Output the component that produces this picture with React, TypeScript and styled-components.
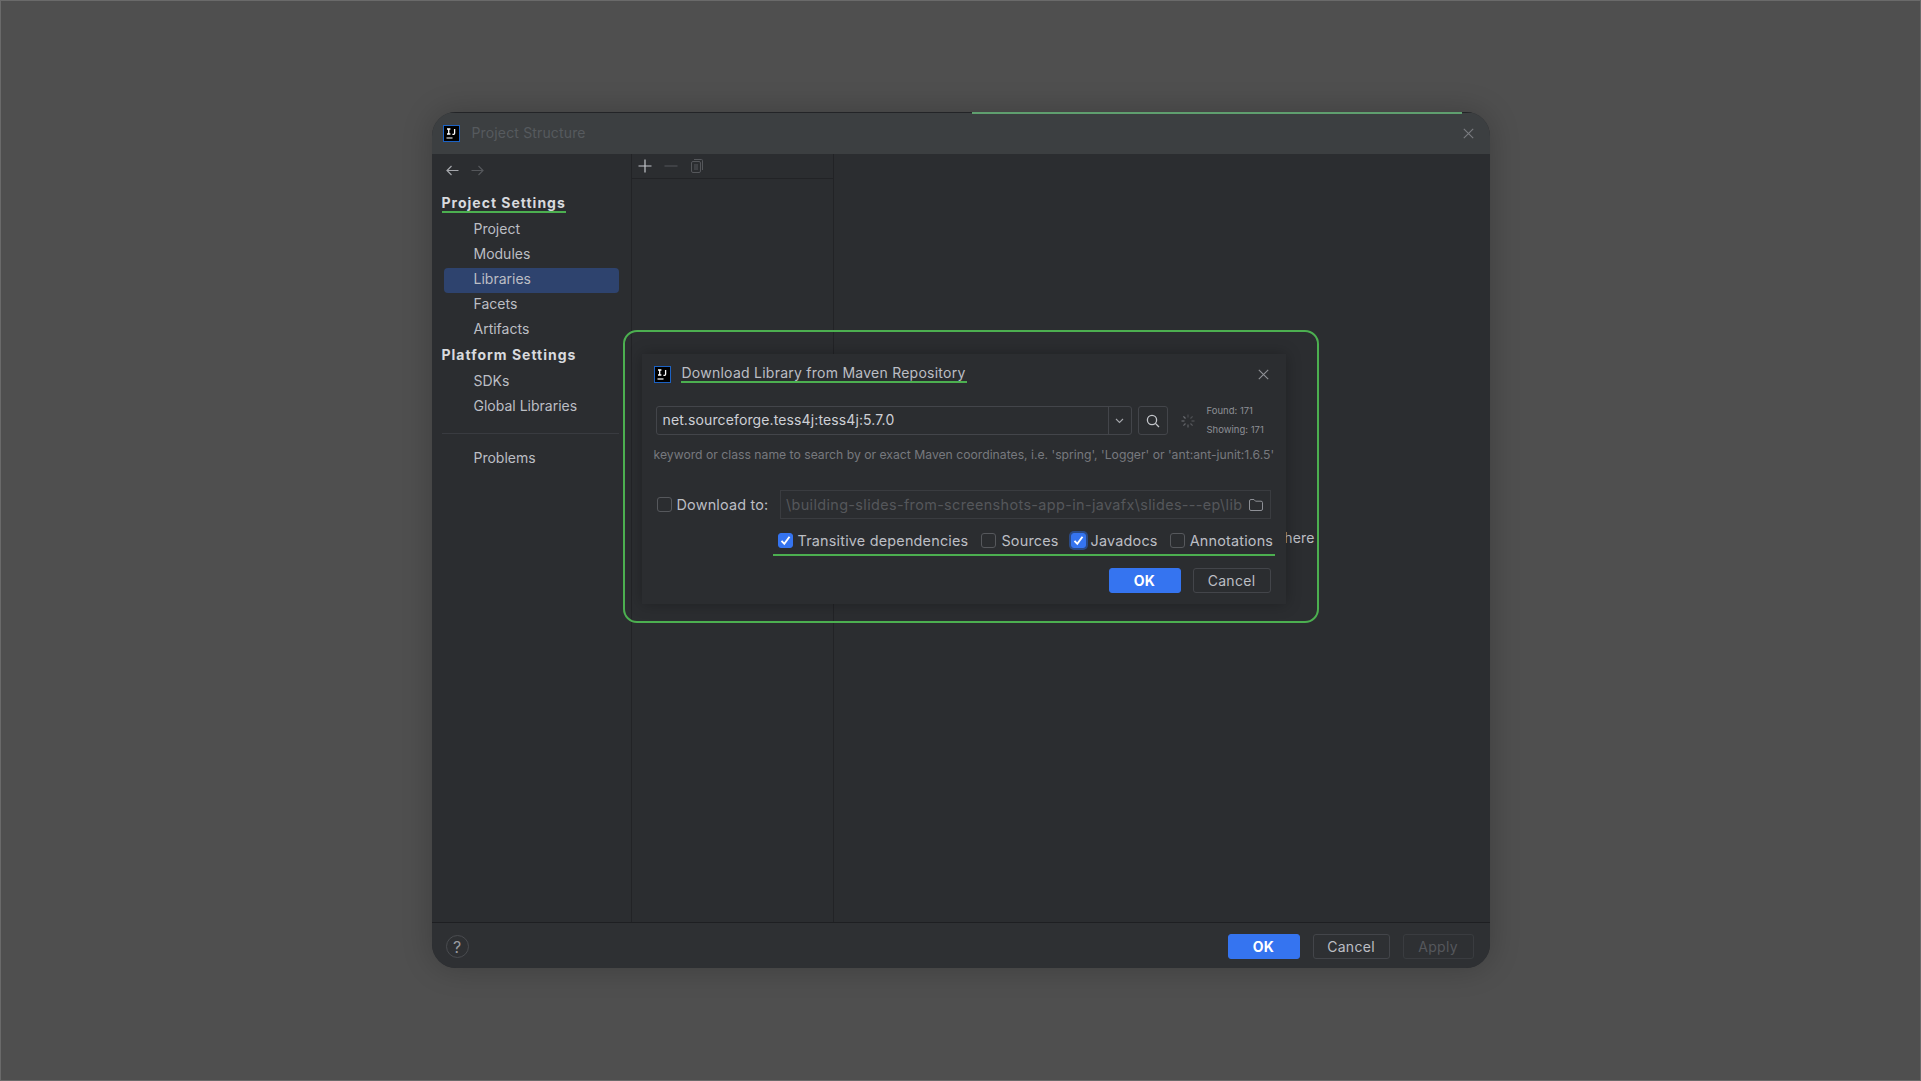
import React from "react";
import styled, { createGlobalStyle } from "styled-components";

const Global = createGlobalStyle`
  html, body { margin: 0; padding: 0; width: 100%; height: 100%; background: #4f4f4f; }
  #root { width: 100%; height: 100%; }
  * { box-sizing: border-box; }
`;

const Page = styled.div`
  width: 1921px; height: 1081px; display: flex; align-items: center; justify-content: center;
  background: #4f4f4f; border: 1px solid #6a6a6a; padding-bottom: 1px;
  font-family: Inter, "Liberation Sans", sans-serif; overflow: hidden;
`;
const Win = styled.div`
  position: relative; width: 1058px; height: 856px; display: flex; flex-direction: column;
  background: #2b2d30; border-radius: 24px; overflow: hidden; box-shadow: 0 0 30px rgba(0,0,0,.22);
`;
const ProgressLine = styled.div`
  position: absolute; top: 0; left: 540px; width: 490px; height: 2px; background: #5f9f6f;
`;
const TitleBar = styled.div`
  height: 42px; flex: none; display: flex; align-items: center; padding: 0 16px 1px 11px; background: #3c3f41; gap: 12px;
  border-top: 1px solid #232427;
`;
const TitleText = styled.div`flex: 1; padding-bottom: 2px; font-size: 14px; letter-spacing: .15px; color: #565a5e;`;
const Body = styled.div`flex: 1; display: flex; min-height: 0;`;
const Side = styled.div`width: 200px; flex: none; border-right: 1px solid #222326; padding: 6px 12px 0 10px; display: flex; flex-direction: column;`;
const NavIcons = styled.div`height: 20px; display: flex; gap: 12px; align-items: center; padding-left: 4px; margin-bottom: 12px;`;
const Heading = styled.div<{ $marked?: boolean }>`
  align-self: flex-start; height: 20px; line-height: 19px; font-size: 14px; font-weight: 700; color: #d8dade;
  letter-spacing: 1px; margin-top: 1px; border-bottom: 2px solid ${p => p.$marked ? "#4caf50" : "transparent"};
`;
const Item = styled.div<{ $active?: boolean }>`
  height: 25px; line-height: 22px; margin-left: 2px; padding-left: 30px; border-radius: 4px; font-size: 14px; color: #bcbec4;
  background: ${p => p.$active ? "#2e436e" : "transparent"};
`;
const ItemGroup = styled.div`display: flex; flex-direction: column; margin-top: 5px; margin-bottom: 1px;`;
const SideRule = styled.div`height: 1px; background: #393b40; margin: 12px 0 13px;`;
const ListPane = styled.div`width: 202px; flex: none; border-right: 1px solid #222326; display: flex; flex-direction: column;`;
const ListBar = styled.div`height: 25px; display: flex; align-items: center; gap: 10px; padding: 0 6px 1px; border-bottom: 1px solid #222326;`;
const Details = styled.div`flex: 1; display: flex; align-items: center; justify-content: center; padding-bottom: 2px; font-size: 14px; letter-spacing: .2px; color: #bcbec4;`;
const Footer = styled.div`
  height: 46px; flex: none; border-top: 1px solid #1e1f22; background: #2e3033; display: flex; align-items: center; justify-content: flex-end; padding: 2px 16px 0 14px; gap: 13px;
`;
const Help = styled.div`
  margin-right: auto; width: 23px; height: 23px; border-radius: 50%; border: 1px solid #4a4c50; color: #9a9ca1;
  display: flex; align-items: center; justify-content: center; font-size: 16px;
`;
const Btn = styled.div<{ $primary?: boolean; $off?: boolean; $w: number }>`
  width: ${p => p.$w}px; height: 25px; border-radius: 3px; display: flex; align-items: center; justify-content: center; font-size: 14px; letter-spacing: .3px;
  font-weight: ${p => p.$primary ? 700 : 400};
  background: ${p => p.$primary ? "#3574f0" : "transparent"};
  border: 1px solid ${p => p.$primary ? "#3574f0" : p.$off ? "#3a3c40" : "#43454a"};
  color: ${p => p.$primary ? "#fff" : p.$off ? "#55575c" : "#bcbec4"};
`;

const Overlay = styled.div`
  position: absolute; left: 191px; top: 218px; width: 696px; height: 293px; border: 2px solid #4caf50; border-radius: 14px;
`;
const Dialog = styled.div`
  position: absolute; left: 210px; top: 242px; width: 644px; height: 250px; background: #2b2d30;
  box-shadow: 0 0 14px rgba(0,0,0,.28); display: flex; flex-direction: column; padding: 12px 14px 10px;
`;
const DlgTitle = styled.div`height: 17px; display: flex; align-items: center; gap: 10px; margin-left: -2px; padding-right: 3px; margin-bottom: 23px;`;
const DlgTitleText = styled.div`
  font-size: 14px; line-height: 17px; height: 19px; color: #bcbec4; letter-spacing: .25px; border-bottom: 2px solid #4caf50;
  margin-right: auto; padding: 0 1px; margin-bottom: 2px;
`;
const SearchRow = styled.div`display: flex; align-items: center; height: 29px;`;
const Combo = styled.div`width: 476px; height: 29px; border: 1px solid #43454a; border-radius: 3px; display: flex; align-items: center;`;
const ComboText = styled.div`flex: 1; padding: 0 0 2px 6px; font-size: 14px; letter-spacing: .12px; color: #ced0d6;`;
const ComboArrow = styled.div`width: 23px; height: 100%; border-left: 1px solid #43454a; display: flex; align-items: center; justify-content: center;`;
const SearchBtn = styled.div`width: 30px; height: 29px; margin-left: 6px; border: 1px solid #43454a; border-radius: 3px; display: flex; align-items: center; justify-content: center;`;
const Spin = styled.div`width: 14px; height: 14px; margin: 0 12px 0 13px; display: flex;`;
const Counts = styled.div`display: flex; flex-direction: column; gap: 7px; font-size: 9.5px; line-height: 12px; color: #8e9096;`;
const Hint = styled.div`height: 40px; padding-top: 13px; font-size: 12.2px; line-height: 14px; white-space: nowrap; color: #77797e; margin-left: -2px;`;
const PathRow = styled.div`display: flex; align-items: center; height: 29px; padding-left: 1px; margin-top: 15px;`;
const Box = styled.div<{ $on?: boolean; $focus?: boolean }>`
  width: 15px; height: 15px; flex: none; border-radius: 3px; display: flex; align-items: center; justify-content: center;
  background: ${p => p.$on ? "#3574f0" : "transparent"}; border: 1px solid ${p => p.$on ? "#3574f0" : "#56585c"};
  box-shadow: ${p => p.$focus ? "0 0 0 2px #2a4a86" : "none"};
`;
const Lbl = styled.div`margin-left: 5px; font-size: 14.4px; letter-spacing: .2px; white-space: nowrap; color: #bcbec4;`;
const PathField = styled.div`
  width: 491px; height: 29px; margin-left: auto; margin-right: 1px; border: 1px solid #3a3c40; display: flex; align-items: center; padding: 0 7px 0 5px; gap: 6px;
`;
const PathText = styled.div`flex: 1; white-space: nowrap; font-size: 14.4px; letter-spacing: .37px; color: #55575b; text-align: right;`;
const Options = styled.div`align-self: flex-end; width: 502px; height: 29px; margin: 8px -3px 0 0; display: flex; align-items: center; padding: 0 0 0 5px; border-bottom: 2px solid #4caf50;`;
const Opt = styled.div<{ $gap: number }>`display: flex; align-items: center; margin-right: ${p => p.$gap}px;`;
const DlgBtns = styled.div`display: flex; justify-content: flex-end; gap: 12px; margin-top: 12px; padding-right: 1px;`;

const IJ = () => (
  <svg width="17" height="17" viewBox="0 0 17 17" style={{ flex: "none" }}>
    <rect x=".5" y=".5" width="16" height="16" fill="#000" stroke="#1c62c4" />
    <path d="M4 4h3.400M5.700 4v5M4 9h3.400M11.600 4v4.300q0 1-1 1H9.400" stroke="#fff" strokeWidth="1.300" fill="none" />
    <path d="M3.500 13h6" stroke="#fff" strokeWidth="1.200" />
  </svg>
);
const X = ({ c = "#8f9196", s = 11 }: { c?: string; s?: number }) => (
  <svg width={s} height={s} viewBox="0 0 11 11"><path d="M.8.8l9.400 9.400M10.200.8L.8 10.200" stroke={c} strokeWidth="1.100" fill="none" /></svg>
);
const Check = () => (
  <svg width="11" height="11" viewBox="0 0 11 11"><path d="M1.500 5.800l2.800 3L9.500 1.800" stroke="#fff" strokeWidth="1.900" fill="none" /></svg>
);
const Arrow = ({ dir, c }: { dir: "l" | "r"; c: string }) => (
  <svg width="13" height="11" viewBox="0 0 13 11" style={{ transform: dir === "r" ? "scaleX(-1)" : undefined }}>
    <path d="M12.500 5.500H1M5.500 1L1 5.500 5.500 10" stroke={c} strokeWidth="1.200" fill="none" />
  </svg>
);

const spokes = Array.from({ length: 8 }, (_, i) => i * 45);

export default function App() {
  return (
    <Page>
      <Global />
      <Win>
        <ProgressLine />
        <TitleBar>
          <IJ />
          <TitleText>Project Structure</TitleText>
          <X c="#7a7c80" />
        </TitleBar>
        <Body>
          <Side>
            <NavIcons>
              <Arrow dir="l" c="#a4a6ab" />
              <Arrow dir="r" c="#55575b" />
            </NavIcons>
            <Heading $marked>Project Settings</Heading>
            <ItemGroup>
              <Item>Project</Item>
              <Item>Modules</Item>
              <Item $active>Libraries</Item>
              <Item>Facets</Item>
              <Item>Artifacts</Item>
            </ItemGroup>
            <Heading>Platform Settings</Heading>
            <ItemGroup>
              <Item>SDKs</Item>
              <Item>Global Libraries</Item>
            </ItemGroup>
            <SideRule />
            <Item>Problems</Item>
          </Side>
          <ListPane>
            <ListBar>
              <svg width="14" height="14" viewBox="0 0 14 14"><path d="M7 .5v13M.5 7h13" stroke="#c4c6cb" strokeWidth="1.200" /></svg>
              <svg width="14" height="14" viewBox="0 0 14 14" style={{ marginLeft: 2 }}><path d="M.5 7h13" stroke="#55575b" strokeWidth="1.200" /></svg>
              <svg width="14" height="14" viewBox="0 0 14 14" style={{ marginLeft: 2 }} fill="none" stroke="#55575b">
                <rect x="1.500" y="2.500" width="9" height="11" rx="1.500" />
                <path d="M4 .5h7.500a1 1 0 0 1 1 1V11M4 6h4M4 8h4M4 10h4" />
              </svg>
            </ListBar>
          </ListPane>
          <Details>Select a library to view or edit its details here</Details>
        </Body>
        <Footer>
          <Help>?</Help>
          <Btn $primary $w={72}>OK</Btn>
          <Btn $w={77}>Cancel</Btn>
          <Btn $off $w={71}>Apply</Btn>
        </Footer>
        <Overlay />
        <Dialog>
          <DlgTitle>
            <IJ />
            <DlgTitleText>Download Library from Maven Repository</DlgTitleText>
            <X />
          </DlgTitle>
          <SearchRow>
            <Combo>
              <ComboText>net.sourceforge.tess4j:tess4j:5.7.0</ComboText>
              <ComboArrow>
                <svg width="9" height="6" viewBox="0 0 9 6"><path d="M1 1l3.500 3.500L8 1" stroke="#a4a6ab" strokeWidth="1.100" fill="none" /></svg>
              </ComboArrow>
            </Combo>
            <SearchBtn>
              <svg width="14" height="14" viewBox="0 0 14 14" fill="none" stroke="#c4c6cb" strokeWidth="1.300"><circle cx="6" cy="6" r="4.600" /><path d="M9.400 9.400L13 13" /></svg>
            </SearchBtn>
            <Spin>
              <svg width="14" height="14" viewBox="0 0 14 14">
                {spokes.map((a, i) => (
                  <path key={a} d="M7 .5v3" stroke="#6c6e73" strokeWidth="1.200" opacity={0.45 + i * 0.08} transform={`rotate(${a} 7 7)`} />
                ))}
              </svg>
            </Spin>
            <Counts>
              <div>Found: 171</div>
              <div>Showing: 171</div>
            </Counts>
          </SearchRow>
          <Hint>keyword or class name to search by or exact Maven coordinates, i.e. 'spring', 'Logger' or 'ant:ant-junit:1.6.5'</Hint>
          <PathRow>
            <Box />
            <Lbl>Download to:</Lbl>
            <PathField>
              <PathText>\building-slides-from-screenshots-app-in-javafx\slides---ep\lib</PathText>
              <svg width="14" height="12" viewBox="0 0 14 12" fill="none" stroke="#8e9096" style={{ flex: "none" }}>
                <path d="M.5 10V2A1.500 1.500 0 0 1 2 .5h3l1.500 1.700H12A1.500 1.500 0 0 1 13.500 3.700V10a1.500 1.500 0 0 1-1.500 1.500H2A1.500 1.500 0 0 1 .5 10z" />
              </svg>
            </PathField>
          </PathRow>
          <Options>
            <Opt $gap={13}><Box $on><Check /></Box><Lbl>Transitive dependencies</Lbl></Opt>
            <Opt $gap={12}><Box /><Lbl>Sources</Lbl></Opt>
            <Opt $gap={12}><Box $on $focus><Check /></Box><Lbl>Javadocs</Lbl></Opt>
            <Opt $gap={0}><Box /><Lbl>Annotations</Lbl></Opt>
          </Options>
          <DlgBtns>
            <Btn $primary $w={72}>OK</Btn>
            <Btn $w={78}>Cancel</Btn>
          </DlgBtns>
        </Dialog>
      </Win>
    </Page>
  );
}
